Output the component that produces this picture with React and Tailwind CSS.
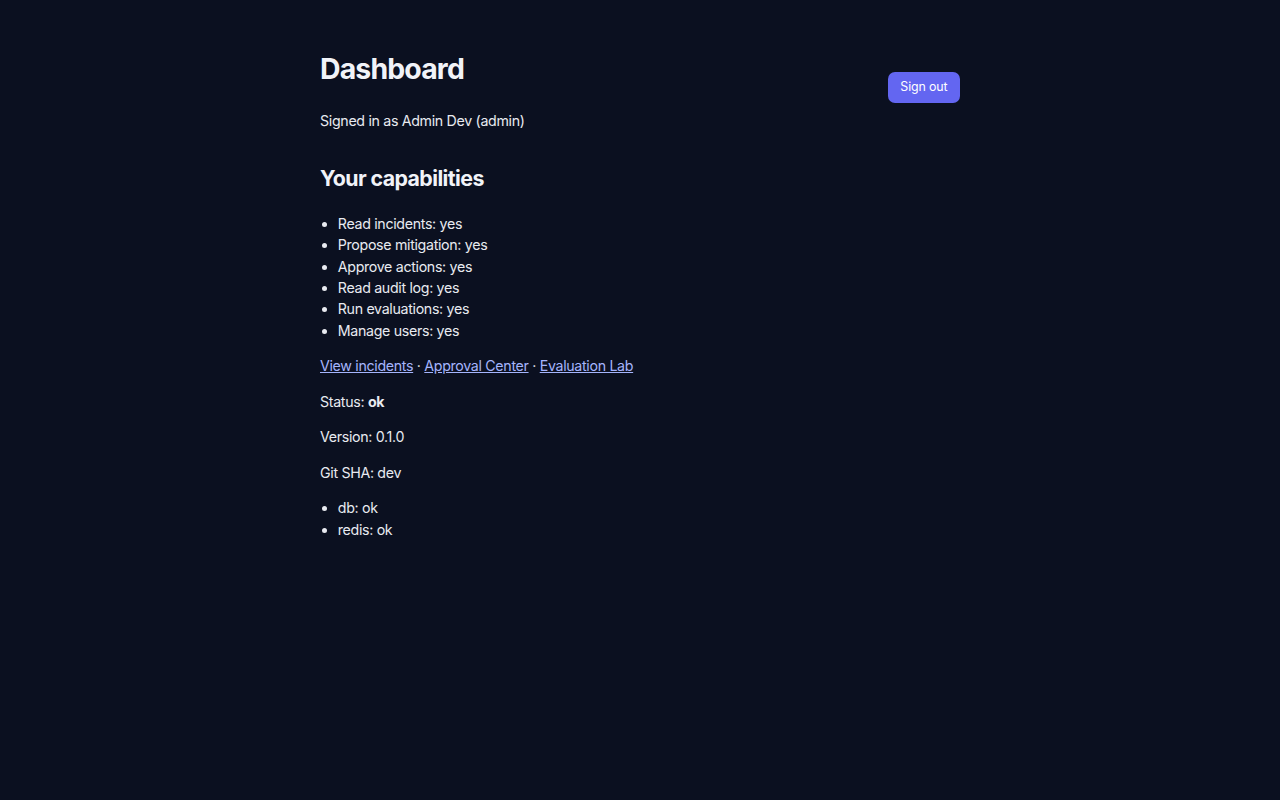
import React from 'react';

const capabilities = [
  ['Read incidents', true],
  ['Propose mitigation', true],
  ['Approve actions', true],
  ['Read audit log', true],
  ['Run evaluations', true],
  ['Manage users', true],
];

const checks = [
  ['db', 'ok'],
  ['redis', 'ok'],
];

const Dashboard = () => {
  return (
    <div
      className="min-h-screen bg-[#0b1020] text-[#e8eaf0] text-[14.22px] leading-[1.5] tracking-[-0.023em]"
      style={{ fontFamily: 'Inter, "Noto Sans", sans-serif' }}
    >
      <div className="mx-auto max-w-[640px] pt-[29.3px]">
        {/* Header */}
        <div className="flex items-center justify-between">
          <div>
            <h1 className="text-[28.44px] font-bold my-[0.67em] text-[#f1f3f8] tracking-[-0.03em]">Dashboard</h1>
            <p className="my-[1em]">Signed in as Admin Dev (admin)</p>
          </div>
          <button className="h-[31.5px] px-[12.5px] rounded-[7px] bg-[#6366f1] text-white text-[12.4px] leading-none tracking-[-0.01em]">
            Sign out
          </button>
        </div>

        {/* Capabilities */}
        <h2 className="text-[21.33px] font-bold my-[0.83em] text-[#f1f3f8] tracking-[-0.027em]">Your capabilities</h2>
        <ul className="list-disc pl-[1.25em] my-[1em]">
          {capabilities.map(([label, allowed]) => (
            <li key={label}>
              {label}: {allowed ? 'yes' : 'no'}
            </li>
          ))}
        </ul>

        <p className="my-[1em]">
          <a href="#" className="text-[#a5b4fc] underline">View incidents</a>
          {' · '}
          <a href="#" className="text-[#a5b4fc] underline">Approval Center</a>
          {' · '}
          <a href="#" className="text-[#a5b4fc] underline">Evaluation Lab</a>
        </p>

        <p className="my-[1em]">
          Status: <strong className="font-bold">ok</strong>
        </p>
        <p className="my-[1em]">Version: 0.1.0</p>
        <p className="my-[1em]">Git SHA: dev</p>
        <ul className="list-disc pl-[1.25em] my-[1em]">
          {checks.map(([name, state]) => (
            <li key={name}>
              {name}: {state}
            </li>
          ))}
        </ul>
      </div>
    </div>
  );
};

export default function App() {
  return <Dashboard />;
}
